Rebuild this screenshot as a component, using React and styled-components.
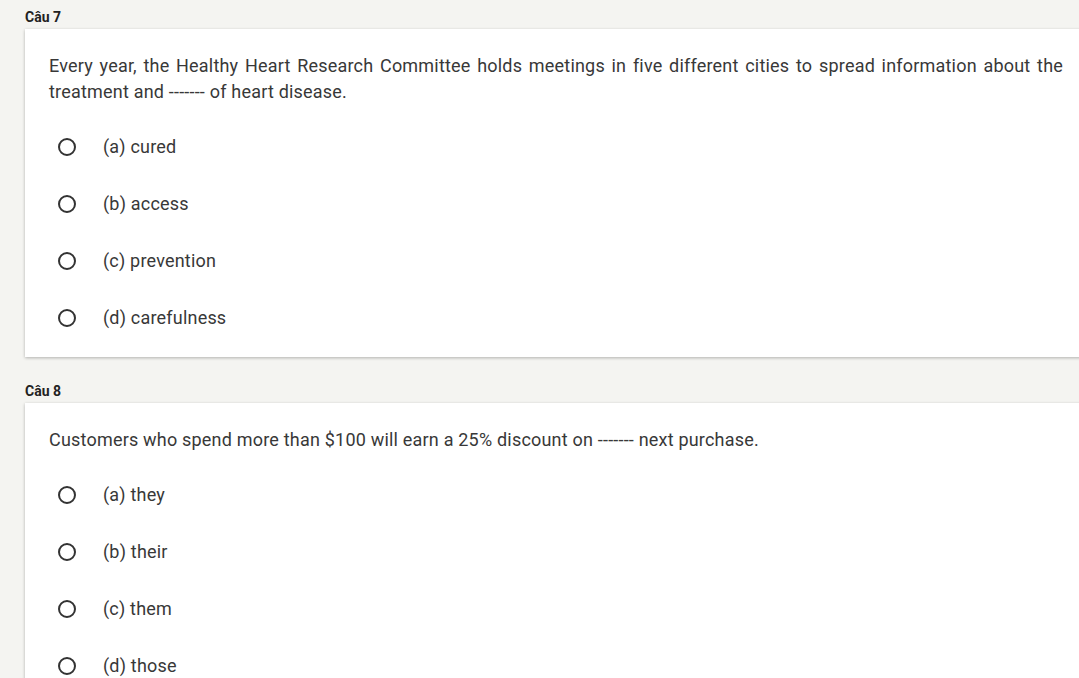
import styled, { createGlobalStyle } from "styled-components"

const Global = createGlobalStyle`
    html, body {
        margin: 0;
        padding: 0;
        background-color: #F4F4F1;
        overflow: hidden;
    }
    body {
        font-family: Roboto, "Noto Sans", sans-serif;
        color: #333;
    }
`

const Page = styled.div`
    padding-left: 25px;
    width: 1062px;
`

const Label = styled.div`
    font-size: 14px;
    font-weight: bold;
    line-height: 20px;
    color: #222;
    padding: 7px 0 2px;
`

const Card = styled.div`
    background-color: #fff;
    box-shadow: 0 1px 3px rgba(0, 0, 0, 0.28);
    padding: 24px 24px 11px;
    margin-bottom: 17px;
`

const Question = styled.p`
    margin: 0;
    font-size: 18px;
    line-height: 26px;
    letter-spacing: 0.2px;
    text-align: justify;
    color: #383838;
`

const Options = styled.div`
    display: flex;
    flex-direction: column;
    margin-top: 13px;
`

const Option = styled.label`
    display: flex;
    align-items: center;
    height: 57px;
    padding-left: 9px;
    font-size: 18px;
    letter-spacing: 0.2px;
    color: #383838;
`

const Radio = styled.span`
    width: 14px;
    height: 14px;
    border: 2px solid #333;
    border-radius: 50%;
    margin-right: 27px;
    flex-shrink: 0;
`

const questions = [
    {
        label: "Câu 7",
        text: "Every year, the Healthy Heart Research Committee holds meetings in five different cities to spread information about the treatment and ------- of heart disease.",
        options: ["(a) cured", "(b) access", "(c) prevention", "(d) carefulness"],
    },
    {
        label: "Câu 8",
        text: "Customers who spend more than $100 will earn a 25% discount on ------- next purchase.",
        options: ["(a) they", "(b) their", "(c) them", "(d) those"],
    },
]

const App = () => {
    return (
        <>
            <Global />
            <Page>
                {questions.map(q => (
                    <div key={q.label}>
                        <Label>{q.label}</Label>
                        <Card>
                            <Question>{q.text}</Question>
                            <Options>
                                {q.options.map(opt => (
                                    <Option key={opt}>
                                        <Radio />
                                        {opt}
                                    </Option>
                                ))}
                            </Options>
                        </Card>
                    </div>
                ))}
            </Page>
        </>
    )
}

export default App
